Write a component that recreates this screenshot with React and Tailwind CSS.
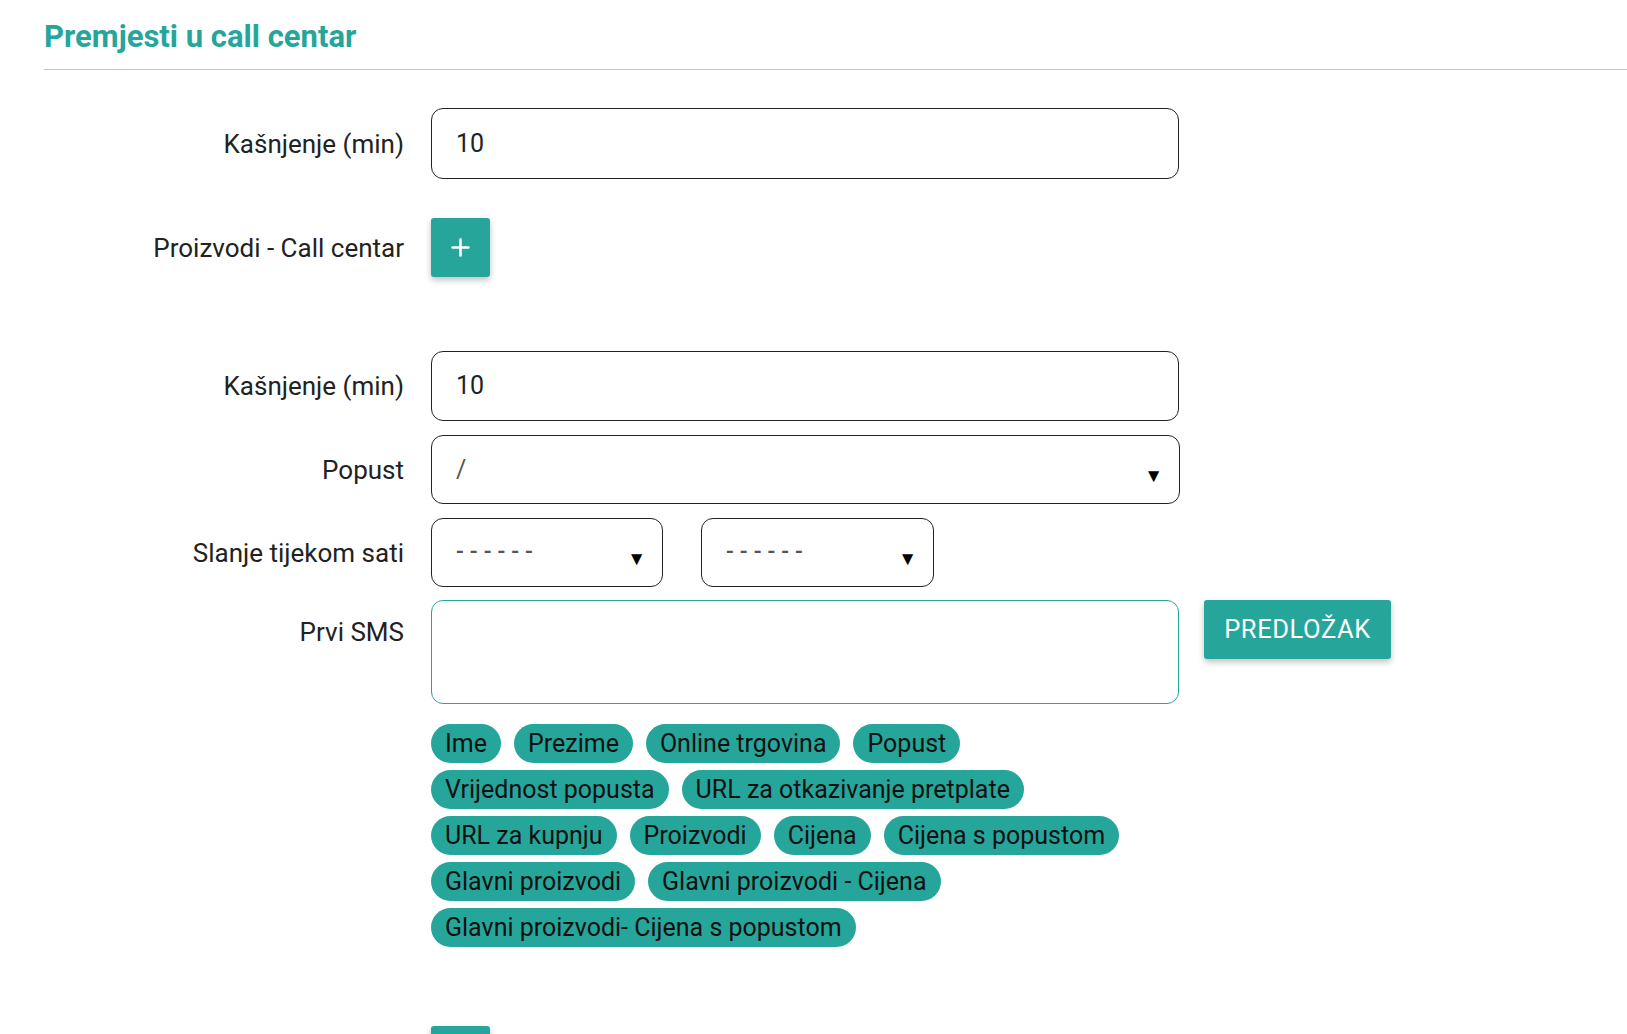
import { Plus } from 'lucide-react';

const tags = [
  'Ime',
  'Prezime',
  'Online trgovina',
  'Popust',
  'Vrijednost popusta',
  'URL za otkazivanje pretplate',
  'URL za kupnju',
  'Proizvodi',
  'Cijena',
  'Cijena s popustom',
  'Glavni proizvodi',
  'Glavni proizvodi - Cijena',
  'Glavni proizvodi- Cijena s popustom',
];

function Label({ children, className = '' }) {
  return (
    <div className={`w-[360px] shrink-0 text-right text-[26px] leading-[30px] text-[#222] ${className}`}>
      {children}
    </div>
  );
}

function TextInput({ value, height = 'h-[71px]' }) {
  return (
    <div className={`flex ${height} w-[748px] items-center rounded-[12px] border border-[#222] pl-[24px] text-[25px] text-[#222]`}>
      {value}
    </div>
  );
}

function SelectBox({ value, width, dashed = false }) {
  return (
    <div className={`flex h-[69px] ${width} items-center justify-between rounded-[12px] border border-[#222] pl-[24px] pr-[16px]`}>
      <span
        className={
          dashed
            ? 'text-[23px] font-medium tracking-[6px] text-[#555]'
            : 'text-[25px] text-[#555]'
        }
      >
        {value}
      </span>
      <span className="mt-[12px] text-[19px] leading-none text-black">▼</span>
    </div>
  );
}

function AddButton() {
  return (
    <button className="flex h-[59px] w-[59px] items-center justify-center rounded-[3px] bg-[#26a69a] text-white shadow-[0_3px_6px_rgba(0,0,0,0.25)]">
      <Plus size={27} strokeWidth={2.3} />
    </button>
  );
}

export default function App() {
  return (
    <div className="min-h-screen overflow-hidden bg-white pl-[44px] font-['Roboto',sans-serif]">
      <h2 className="pt-[19px] text-[31px] font-bold leading-[36px] text-[#26a69a]">Premjesti u call centar</h2>
      <div className="mt-[14px] border-b border-[#c4c4c4]" />

      <div className="mt-[38px] flex items-center gap-[27px]">
        <Label>Kašnjenje (min)</Label>
        <TextInput value="10" />
      </div>

      <div className="mt-[39px] flex items-center gap-[27px]">
        <Label>Proizvodi - Call centar</Label>
        <AddButton />
      </div>

      <div className="mt-[74px] flex items-center gap-[27px]">
        <Label>Kašnjenje (min)</Label>
        <TextInput value="10" height="h-[70px]" />
      </div>

      <div className="mt-[14px] flex items-center gap-[27px]">
        <Label>Popust</Label>
        <SelectBox value="/" width="w-[749px]" />
      </div>

      <div className="mt-[14px] flex items-center gap-[27px]">
        <Label>Slanje tijekom sati</Label>
        <div className="flex gap-[38px]">
          <SelectBox value="------" width="w-[232px]" dashed />
          <SelectBox value="------" width="w-[233px]" dashed />
        </div>
      </div>

      <div className="mt-[13px] flex items-start gap-[27px]">
        <Label className="pt-[17px]">Prvi SMS</Label>
        <div className="h-[104px] w-[748px] rounded-[12px] border border-[#26a69a]" />
        <button className="ml-[-2px] h-[59px] w-[187px] rounded-[3px] bg-[#26a69a] text-[25.5px] tracking-[0.6px] text-white shadow-[0_3px_6px_rgba(0,0,0,0.25)]">
          PREDLOŽAK
        </button>
      </div>

      <div className="ml-[387px] mt-[20px] flex w-[750px] flex-wrap gap-x-[13px] gap-y-[7px]">
        {tags.map((tag) => (
          <span
            key={tag}
            className="flex h-[39px] items-center rounded-full bg-[#26a69a] px-[14px] text-[25px] text-[#111]"
          >
            {tag}
          </span>
        ))}
      </div>

      <div className="ml-[387px] mt-[79px]">
        <AddButton />
      </div>
    </div>
  );
}
